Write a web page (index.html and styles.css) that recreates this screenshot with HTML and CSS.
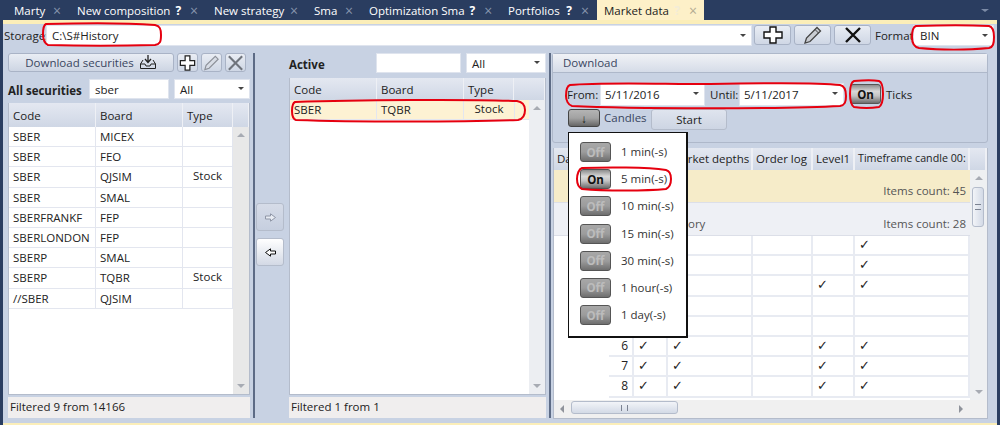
FILE: index.html
```html
<!DOCTYPE html>
<html lang="en">
<head>
    <meta charset="UTF-8" />
    <title>Market data</title>
    <link rel="stylesheet" href="styles.css">
</head>
<body>
<div class="app">
    <div class="tabs">
        <div class="tab w-marty"><span>Marty</span><i class="close">×</i></div>
        <div class="tab w-comp"><span>New composition</span><b class="help">?</b><i class="close">×</i></div>
        <div class="tab w-strat"><span>New strategy</span><i class="close">×</i></div>
        <div class="tab w-sma"><span>Sma</span><i class="close">×</i></div>
        <div class="tab w-opt"><span>Optimization Sma</span><b class="help">?</b><i class="close">×</i></div>
        <div class="tab w-port"><span>Portfolios</span><b class="help">?</b><i class="close">×</i></div>
        <div class="tab active w-market"><span>Market data</span><b class="help">?</b><i class="close">×</i></div>
        <div class="tabs-menu"><span class="caret"></span></div>
    </div>
    <div class="accent"></div>

    <div class="storage">
        <label class="storage-label">Storage:</label>
        <div class="field storage-path">C:\S#History<span class="caret"></span></div>
        <button class="tool big">
            <svg width="24" height="20" viewBox="0 0 24 20"><path d="M9 2h6v5h6v6h-6v5H9v-5H3V7h6z" fill="#fff" stroke="#111" stroke-width="1.4"/></svg>
        </button>
        <button class="tool big">
            <svg width="24" height="20" viewBox="0 0 24 20"><path d="M4 18l1.500-5L16 2.500l3.500 3.500L9 16.500z" fill="#c9ccd2" stroke="#444" stroke-width="1.300"/><path d="M14 4.500l3.500 3.500" stroke="#444"/></svg>
        </button>
        <button class="tool big">
            <svg width="24" height="20" viewBox="0 0 24 20"><path d="M5 3l14 14M19 3L5 17" stroke="#111" stroke-width="2.400"/></svg>
        </button>
        <label class="format-label">Format</label>
        <div class="field format">BIN<span class="caret"></span></div>
    </div>

    <div class="main">
        <section class="left">
            <div class="left-tools">
                <button class="download-btn">Download securities
                    <svg width="18" height="17" viewBox="0 0 18 17"><path d="M9 1v7M6 5l3 3.500L12 5" fill="none" stroke="#222" stroke-width="1.300"/><path d="M4 6L1.500 10v4.500h15V10L14 6M1.500 10h4.500l1 2h4l1-2h4.500" fill="none" stroke="#222"/></svg>
                </button>
                <button class="tool small">
                    <svg width="20" height="18" viewBox="0 0 20 18"><path d="M7.500 1.500h5v5h5v5h-5v5h-5v-5h-5v-5h5z" fill="#fff" stroke="#222" stroke-width="1.300"/></svg>
                </button>
                <button class="tool small">
                    <svg width="20" height="18" viewBox="0 0 20 18"><path d="M3 16l1.300-4.500L14 2l3 3-9.500 9.500z" fill="#d8dde6" stroke="#8c9098" stroke-width="1.200"/></svg>
                </button>
                <button class="tool small">
                    <svg width="20" height="18" viewBox="0 0 20 18"><path d="M3 2l14 14M17 2L3 16" stroke="#6f747c" stroke-width="2.200"/></svg>
                </button>
            </div>
            <div class="filter-row">
                <strong class="all-label">All securities</strong>
                <div class="field search">sber</div>
                <div class="field kind">All<span class="caret"></span></div>
            </div>
            <div class="list list-left">
                <div class="list-head"><div>Code</div><div>Board</div><div>Type</div><div></div></div>
                <div class="list-body">
                    <div class="list-rows">
                        <div class="list-row"><div>SBER</div><div>MICEX</div><div></div></div>
                        <div class="list-row"><div>SBER</div><div>FEO</div><div></div></div>
                        <div class="list-row"><div>SBER</div><div>QJSIM</div><div class="type">Stock</div></div>
                        <div class="list-row"><div>SBER</div><div>SMAL</div><div></div></div>
                        <div class="list-row"><div>SBERFRANKF</div><div>FEP</div><div></div></div>
                        <div class="list-row"><div>SBERLONDON</div><div>FEP</div><div></div></div>
                        <div class="list-row"><div>SBERP</div><div>SMAL</div><div></div></div>
                        <div class="list-row"><div>SBERP</div><div>TQBR</div><div class="type">Stock</div></div>
                        <div class="list-row"><div>//SBER</div><div>QJSIM</div><div></div></div>
                    </div>
                    <div class="vbar"><span class="tri up"></span><span class="tri down"></span></div>
                </div>
            </div>
            <div class="status">Filtered 9 from 14166</div>
        </section>

        <div class="movers">
            <div class="splitter"></div>
            <div class="mover-btns">
                <button class="mover dim">
                    <svg width="11" height="9" viewBox="0 0 11 9"><path d="M.5 3h5V.8l5 3.700-5 3.700V6h-5z" fill="#e8ecf3" stroke="#8f96a6"/></svg>
                </button>
                <button class="mover lit">
                    <svg width="11" height="9" viewBox="0 0 11 9"><path d="M10.500 3h-5V.8l-5 3.700 5 3.700V6h5z" fill="#fff" stroke="#111"/></svg>
                </button>
            </div>
        </div>

        <section class="middle">
            <div class="active-row">
                <strong class="active-label">Active</strong>
                <div class="field active-search"></div>
                <div class="field kind">All<span class="caret"></span></div>
            </div>
            <div class="list list-mid">
                <div class="list-head"><div>Code</div><div>Board</div><div>Type</div><div></div></div>
                <div class="list-body">
                    <div class="list-rows">
                        <div class="list-row selected"><div>SBER</div><div>TQBR</div><div class="type">Stock</div></div>
                    </div>
                    <div class="vbar"><span class="tri up"></span><span class="tri down"></span></div>
                </div>
            </div>
            <div class="status">Filtered 1 from 1</div>
        </section>

        <div class="splitter-right"></div>

        <section class="right">
            <div class="expander">
                <div class="expander-head">Download</div>
                <div class="expander-body">
                    <div class="range-row">
                        <label class="from-label">From:</label>
                        <div class="field date">5/11/2016<span class="caret"></span></div>
                        <label class="until-label">Until:</label>
                        <div class="field date">5/11/2017<span class="caret"></span></div>
                        <button class="toggle on ticks-toggle">On</button>
                        <span class="ticks-label">Ticks</span>
                    </div>
                    <div class="candle-row">
                        <button class="toggle on arrow-toggle">↓</button>
                        <span class="candles-label">Candles</span>
                        <button class="start-btn">Start</button>
                    </div>
                </div>
            </div>

            <div class="md-grid">
                <div class="md-head">
                    <div>Date</div><div>Market depths</div><div>Order log</div><div>Level1</div><div class="clip">Timeframe candle 00:</div><div></div>
                </div>
                <div class="md-body">
                    <div class="md-rows">
                        <div class="md-group current"><span>Items count: 45</span></div>
                        <div class="md-group"><em>ory</em><span>Items count: 28</span></div>
                        <div class="md-row"><div></div><div></div><div></div><div></div><div></div><div>✓</div></div>
                        <div class="md-row"><div></div><div></div><div></div><div></div><div></div><div>✓</div></div>
                        <div class="md-row"><div></div><div></div><div></div><div></div><div>✓</div><div>✓</div></div>
                        <div class="md-row"><div></div><div></div><div></div><div></div><div></div><div></div></div>
                        <div class="md-row"><div></div><div></div><div></div><div></div><div></div><div></div></div>
                        <div class="md-row"><div class="num">6</div><div>✓</div><div>✓</div><div></div><div>✓</div><div>✓</div></div>
                        <div class="md-row"><div class="num">7</div><div>✓</div><div>✓</div><div></div><div>✓</div><div>✓</div></div>
                        <div class="md-row"><div class="num">8</div><div>✓</div><div>✓</div><div></div><div>✓</div><div>✓</div></div>
                    </div>
                    <div class="md-vbar">
                        <span class="tri up"></span>
                        <div class="thumb-v"><i></i></div>
                        <span class="tri down"></span>
                    </div>
                </div>
                <div class="md-hbar">
                    <span class="tri left-tri"></span>
                    <div class="thumb-h"><i></i></div>
                    <span class="tri right-tri"></span>
                </div>
            </div>
        </section>
    </div>
    <div class="bottom-line"></div>

    <!-- candles popup -->
    <div class="popup">
        <div class="popup-row"><button class="toggle off">Off</button><span>1 min(-s)</span></div>
        <div class="popup-row"><button class="toggle on">On</button><span>5 min(-s)</span></div>
        <div class="popup-row"><button class="toggle off">Off</button><span>10 min(-s)</span></div>
        <div class="popup-row"><button class="toggle off">Off</button><span>15 min(-s)</span></div>
        <div class="popup-row"><button class="toggle off">Off</button><span>30 min(-s)</span></div>
        <div class="popup-row"><button class="toggle off">Off</button><span>1 hour(-s)</span></div>
        <div class="popup-row"><button class="toggle off">Off</button><span>1 day(-s)</span></div>
    </div>

    <!-- red marks drawn over the screenshot -->
    <svg class="marks" width="1000" height="425" viewBox="0 0 1000 425">
        <path d="M46 24C80 23 130 23 155 25c5 1 6 4 6 10 0 7-1 9-6 10-35 1-75 1-107 0-4-2-5-6-5-11 0-6 1-9 3-10z"/>
        <path d="M916 26c25-1 55-1 73 0 4 1 5 5 5 11 0 7-1 10-5 11-20 2-50 2-70 0-5-1-7-6-7-11 0-6 1-10 4-11z"/>
        <path d="M295 102c60-2 170-3 222-1 6 1 8 4 8 9 0 6-2 9-7 10-55 2-165 2-222 0-3-1-4-5-4-9 0-5 1-8 3-9z"/>
        <path d="M570 85c30-3 90-1 140-1 50-1 105-2 130 1 5 1 6 5 6 11 0 6-1 9-6 10-50 3-210 3-268 0-4-1-6-6-6-10 0-5 1-10 4-11z"/>
        <path d="M854 81c10-1 20-1 25 0 3 1 4 6 4 13 0 7-1 11-4 13-7 1-18 1-25 0-3-2-4-7-4-13 0-6 1-12 4-13z"/>
        <path d="M582 168c25-1 65-1 84 2 4 1 5 5 5 9 0 5-1 8-5 10-20 2-62 2-84 0-4-2-5-6-5-10 0-5 2-10 5-11z"/>
    </svg>
</div>
</body>
</html>
```
FILE: styles.css
```css
* {
    box-sizing: border-box;
}
html, body {
    margin: 0;
    padding: 0;
}
body {
    width: 1000px;
    height: 425px;
    overflow: hidden;
    font-family: 'Open Sans', sans-serif;
    font-size: 11.5px;
    color: #222;
}
button {
    font-family: inherit;
    font-size: inherit;
    color: inherit;
    padding: 0;
}
.app {
    position: relative;
    width: 1000px;
    height: 425px;
    background-color: #c8d2e3;
    border-left: 3px solid #2a3d60;
    border-right: 3px solid #2a3d60;
    display: flex;
    flex-direction: column;
}

/* tabs */
.tabs {
    height: 20px;
    margin-left: -3px;
    margin-right: -3px;
    background-color: #2a3d60;
    color: #fff;
    display: flex;
    flex-shrink: 0;
}
.tab {
    display: flex;
    align-items: center;
    padding-left: 14px;
    height: 20px;
    white-space: nowrap;
}
.w-marty { width: 63px; }
.w-comp { width: 137px; }
.w-strat { width: 100px; }
.w-sma { width: 55px; }
.w-opt { width: 139px; }
.w-port { width: 103px; padding-right: 6px; }
.w-market { width: 107px; padding-left: 7px; padding-right: 5px; }
.tab.active {
    background-color: #fdf0c8;
    color: #222;
}
.tab span {
    flex: 1;
}
.help {
    width: 16px;
    margin-right: 2px;
    font-size: 12px;
    font-style: normal;
    text-align: center;
}
.close {
    width: 12px;
    font-style: normal;
    font-size: 14px;
    color: #8695ad;
    text-align: center;
}
.active .help {
    color: #f3ecd8;
}
.active .close {
    color: #b3ab92;
}
.tabs-menu {
    margin-left: auto;
    width: 30px;
    display: flex;
    align-items: center;
    justify-content: center;
}
.tabs-menu .caret {
    position: static;
    border-top-color: #7c8ba6;
    border-left-width: 4px;
    border-right-width: 4px;
    margin: 0;
}
.accent {
    height: 4px;
    flex-shrink: 0;
    background-color: #fbeeb9;
}
.bottom-line {
    position: absolute;
    left: 0;
    right: 0;
    bottom: 0;
    height: 2px;
    background-color: #fbeeb9;
}

/* fields */
.field {
    position: relative;
    background-color: #fff;
    border: 1px solid #dfe4ee;
    padding-left: 5px;
    display: flex;
    align-items: center;
    white-space: nowrap;
}
.caret {
    position: absolute;
    right: 5px;
    top: 50%;
    margin-top: -2px;
    width: 0;
    height: 0;
    border-top: 3px solid #444;
    border-left: 3px solid transparent;
    border-right: 3px solid transparent;
}

/* storage row */
.storage {
    height: 21px;
    margin-top: 1px;
    display: flex;
    align-items: stretch;
    flex-shrink: 0;
}
.storage-label {
    width: 43px;
    padding-left: 1px;
    line-height: 21px;
}
.storage-path {
    width: 706px;
    margin-right: 2px;
    padding-left: 5px;
}
.tool {
    background: linear-gradient(#e9edf4, #cfd7e5);
    border: 1px solid #a9b3c6;
    border-radius: 3px;
    display: flex;
    align-items: center;
    justify-content: center;
}
.tool.big {
    width: 37px;
    height: 20px;
    margin-right: 3px;
}
.format-label {
    width: 38px;
    padding-left: 1px;
    line-height: 21px;
}
.format {
    width: 81px;
    margin-left: 1px;
    padding-left: 6px;
}

/* three panels */
.main {
    margin-top: 7px;
    height: 365px;
    padding-left: 5px;
    display: flex;
    flex-shrink: 0;
}
.left {
    width: 242px;
    display: flex;
    flex-direction: column;
}
.left-tools {
    display: flex;
    height: 19px;
}
.download-btn {
    width: 166px;
    height: 19px;
    margin-right: 3px;
    background: linear-gradient(#e9edf4, #cdd5e3);
    border: 1px solid #a9b3c6;
    border-radius: 3px;
    color: #3a4660;
    display: flex;
    align-items: center;
    justify-content: center;
    gap: 5px;
}
.tool.small {
    width: 21px;
    height: 19px;
    margin-right: 3px;
}
.filter-row {
    margin-top: 7px;
    height: 20px;
    display: flex;
}
.all-label {
    width: 81px;
    line-height: 24px;
    font-weight: 700;
}
.search {
    width: 80px;
    margin-right: 5px;
}
.kind {
    width: 76px;
}
.list {
    display: flex;
    flex-direction: column;
    background-color: #fff;
    border: 1px solid #b4bccb;
    border-top: none;
    height: 292px;
}
.list-left {
    margin-top: 4px;
}
.list-head {
    display: grid;
    background: linear-gradient(#e4e8f1, #cfd7e5);
    align-items: stretch;
    flex-shrink: 0;
}
.list-head div {
    padding-left: 4px;
    border-right: 1px solid #eef0f5;
    display: flex;
    align-items: center;
}
.list-left .list-head {
    height: 24px;
    grid-template-columns: 87px 87px 50px 1fr;
}
.list-mid .list-head {
    height: 22px;
    grid-template-columns: 87px 87px 50px 1fr;
}
.list-body {
    flex: 1;
    display: flex;
    min-height: 0;
}
.list-rows {
    flex: 1;
}
.list-row {
    display: grid;
    height: 20.200px;
    border-bottom: 1px solid #e3e6ef;
    align-items: center;
}
.list-left .list-row {
    grid-template-columns: 87px 87px 50px;
}
.list-mid .list-row {
    grid-template-columns: 87px 87px 51px;
}
.list-row div {
    height: 100%;
    padding-left: 4px;
    border-right: 1px solid #e3e6ef;
    display: flex;
    align-items: center;
}
.list-row .type {
    padding: 0 0 3px 0;
    justify-content: center;
}
.list-row.selected {
    background-color: #fdf2d3;
}
.vbar {
    position: relative;
    background-color: #e8e8e8;
}
.list-left .vbar {
    width: 17px;
}
.list-mid .vbar {
    width: 16px;
    background-color: #eceef2;
}
.tri {
    position: absolute;
    width: 0;
    height: 0;
}
.tri.up {
    top: 6px;
    left: 50%;
    margin-left: -4px;
    border-bottom: 4px solid #a7abb3;
    border-left: 4px solid transparent;
    border-right: 4px solid transparent;
}
.tri.down {
    bottom: 6px;
    left: 50%;
    margin-left: -4px;
    border-top: 4px solid #a7abb3;
    border-left: 4px solid transparent;
    border-right: 4px solid transparent;
}
.status {
    height: 21px;
    margin-top: 2px;
    padding-left: 2px;
    background-color: #f0eeee;
    line-height: 20px;
}

/* movers */
.movers {
    width: 39px;
    display: flex;
}
.splitter {
    width: 2px;
    margin-left: 3px;
    background-color: #5d6b85;
}
.mover-btns {
    margin-left: 1px;
    padding-top: 150px;
    display: flex;
    flex-direction: column;
    gap: 7px;
}
.mover {
    width: 28px;
    height: 28px;
    border: 1px solid #b4bccb;
    border-radius: 3px;
    display: flex;
    align-items: center;
    justify-content: center;
}
.mover.dim {
    background: linear-gradient(#d6dce8, #c6cfdf);
}
.mover.lit {
    background: linear-gradient(#fff, #d3d9e5);
}

/* middle */
.middle {
    width: 257px;
    display: flex;
    flex-direction: column;
}
.active-row {
    height: 20px;
    display: flex;
}
.active-label {
    width: 87px;
    line-height: 23px;
    font-weight: 700;
}
.active-search {
    width: 85px;
    margin-right: 5px;
}
.middle .kind {
    width: 80px;
}
.list-mid {
    margin-top: 5px;
    height: 317px;
}
.splitter-right {
    width: 6px;
    flex-shrink: 0;
    position: relative;
}
.splitter-right::after {
    content: "";
    position: absolute;
    left: 3px;
    top: 0;
    bottom: 0;
    width: 2px;
    background-color: #5d6b85;
}

/* download panel */
.right {
    width: 436px;
}
.expander {
    height: 90px;
    border: 1px solid #aeb8ca;
    border-radius: 3px;
}
.expander-head {
    height: 19px;
    padding-left: 10px;
    line-height: 18px;
    color: #3a4660;
    background: linear-gradient(#f0f2f6, #d5dce8);
    border-bottom: 1px solid #aeb8ca;
}
.expander-body {
    padding: 10px 0 0 14px;
}
.range-row {
    display: flex;
    align-items: center;
    height: 22px;
}
.from-label {
    width: 33px;
}
.until-label {
    width: 34px;
    padding-left: 5px;
}
.date {
    width: 105px;
    height: 23px;
    padding-left: 4px;
}
.ticks-toggle {
    margin-left: 6px;
    margin-right: 5px;
}
.candle-row {
    display: flex;
    align-items: flex-start;
    margin-top: 4px;
}
.toggle {
    width: 31px;
    height: 20px;
    font-weight: 700;
    border: 1px solid #555;
    border-radius: 3px;
    flex-shrink: 0;
}
.toggle.on {
    color: #111;
    background: linear-gradient(#8d8d8d, #d8d8d8 35%, #c4c4c4 60%, #6c6c6c);
}
.toggle.off {
    color: #bcbcbc;
    background: linear-gradient(#a8a8a8, #9c9c9c 50%, #6e6e6e);
}
.toggle.arrow-toggle {
    width: 32px;
    height: 18px;
    margin-left: 1px;
    font-weight: 400;
    background: linear-gradient(#b4b4b4, #a2a2a2 50%, #666);
    border-color: #444;
}
.candles-label {
    margin-left: 4px;
    width: 47px;
    line-height: 18px;
    color: #3a4660;
}
.start-btn {
    width: 76px;
    height: 21px;
    background: linear-gradient(#dfe4ee, #cdd5e3);
    border: 1px solid #b4bccb;
    border-radius: 3px;
}

/* market data grid */
.md-grid {
    margin-top: 5px;
    margin-left: 1px;
    height: 271px;
    background-color: #f0f0f0;
    border: 1px solid #b4bccb;
    border-top: none;
    display: flex;
    flex-direction: column;
}
.md-head {
    height: 22px;
    flex-shrink: 0;
    display: grid;
    grid-template-columns: 114px 85px 60px 42px 115px 1fr;
    background: linear-gradient(#e4e8f1, #cfd7e5);
}
.md-head div {
    padding-left: 3px;
    border-right: 2px solid #eef0f5;
    line-height: 21px;
    white-space: nowrap;
    overflow: hidden;
}
.md-head .clip {
    font-size: 10.700px;
}
.md-body {
    flex: 1;
    display: flex;
    min-height: 0;
}
.md-rows {
    width: 416px;
    background-color: #fff;
    overflow: hidden;
}
.md-group {
    height: 33px;
    padding: 0 4px 4px 0;
    position: relative;
    display: flex;
    justify-content: flex-end;
    align-items: flex-end;
    background-color: #eef0f5;
    border-bottom: 1px solid #dcdfe8;
    color: #555;
}
.md-group.current {
    background-color: #f6ecc9;
}
.md-group em {
    position: absolute;
    left: 134px;
    bottom: 4px;
    font-style: normal;
}
.md-row {
    height: 20.200px;
    margin-left: 55px;
    display: grid;
    grid-template-columns: 25px 34px 85px 60px 42px 115px;
    border-bottom: 2px solid #e8ebf2;
}
.md-row div {
    padding-left: 4px;
    border-right: 2px solid #e8ebf2;
    font-family: 'DejaVu Sans', sans-serif;
    font-size: 13px;
    line-height: 18px;
}
.md-row .num {
    padding: 0 4px 0 0;
    text-align: right;
    font-family: 'Open Sans', sans-serif;
    font-size: 12px;
}
.md-vbar {
    position: relative;
    flex: 1;
    background-color: #eef0f2;
}
.thumb-v {
    position: absolute;
    left: 2px;
    right: 3px;
    top: 17px;
    height: 40px;
    background: linear-gradient(90deg, #f2f4f8, #d3dae6);
    border: 1px solid #b4bccb;
    border-radius: 3px;
    display: flex;
    align-items: center;
    justify-content: center;
}
.thumb-v i {
    width: 6px;
    height: 6px;
    border-top: 1px solid #7b8291;
    border-bottom: 1px solid #7b8291;
}
.md-hbar {
    position: relative;
    height: 18px;
    flex-shrink: 0;
    background-color: #f0f0f0;
}
.thumb-h {
    position: absolute;
    left: 17px;
    top: 1px;
    width: 107px;
    height: 13px;
    background: linear-gradient(#f2f4f8, #d3dae6);
    border: 1px solid #b4bccb;
    border-radius: 3px;
    display: flex;
    align-items: center;
    justify-content: center;
}
.thumb-h i {
    width: 7px;
    height: 6px;
    border-left: 1px solid #7b8291;
    border-right: 1px solid #7b8291;
}
.tri.left-tri {
    left: 6px;
    top: 5px;
    border-right: 4px solid #8f939b;
    border-top: 4px solid transparent;
    border-bottom: 4px solid transparent;
}
.tri.right-tri {
    left: 405px;
    top: 5px;
    border-left: 4px solid #8f939b;
    border-top: 4px solid transparent;
    border-bottom: 4px solid transparent;
}

/* candles popup */
.popup {
    position: absolute;
    left: 565px;
    top: 132px;
    width: 120px;
    height: 206px;
    padding: 9px 0 0 11px;
    background-color: #fff;
    border: 1px solid #111;
    border-right-width: 2px;
    border-bottom-width: 2px;
    z-index: 2;
}
.popup-row {
    height: 27.200px;
    display: flex;
    align-items: flex-start;
    gap: 10px;
}
.popup-row span {
    line-height: 20px;
    color: #333;
}
.marks {
    position: absolute;
    left: -3px;
    top: 0;
    z-index: 3;
    pointer-events: none;
}
.marks path {
    fill: none;
    stroke: #e6000f;
    stroke-width: 2;
}
```
